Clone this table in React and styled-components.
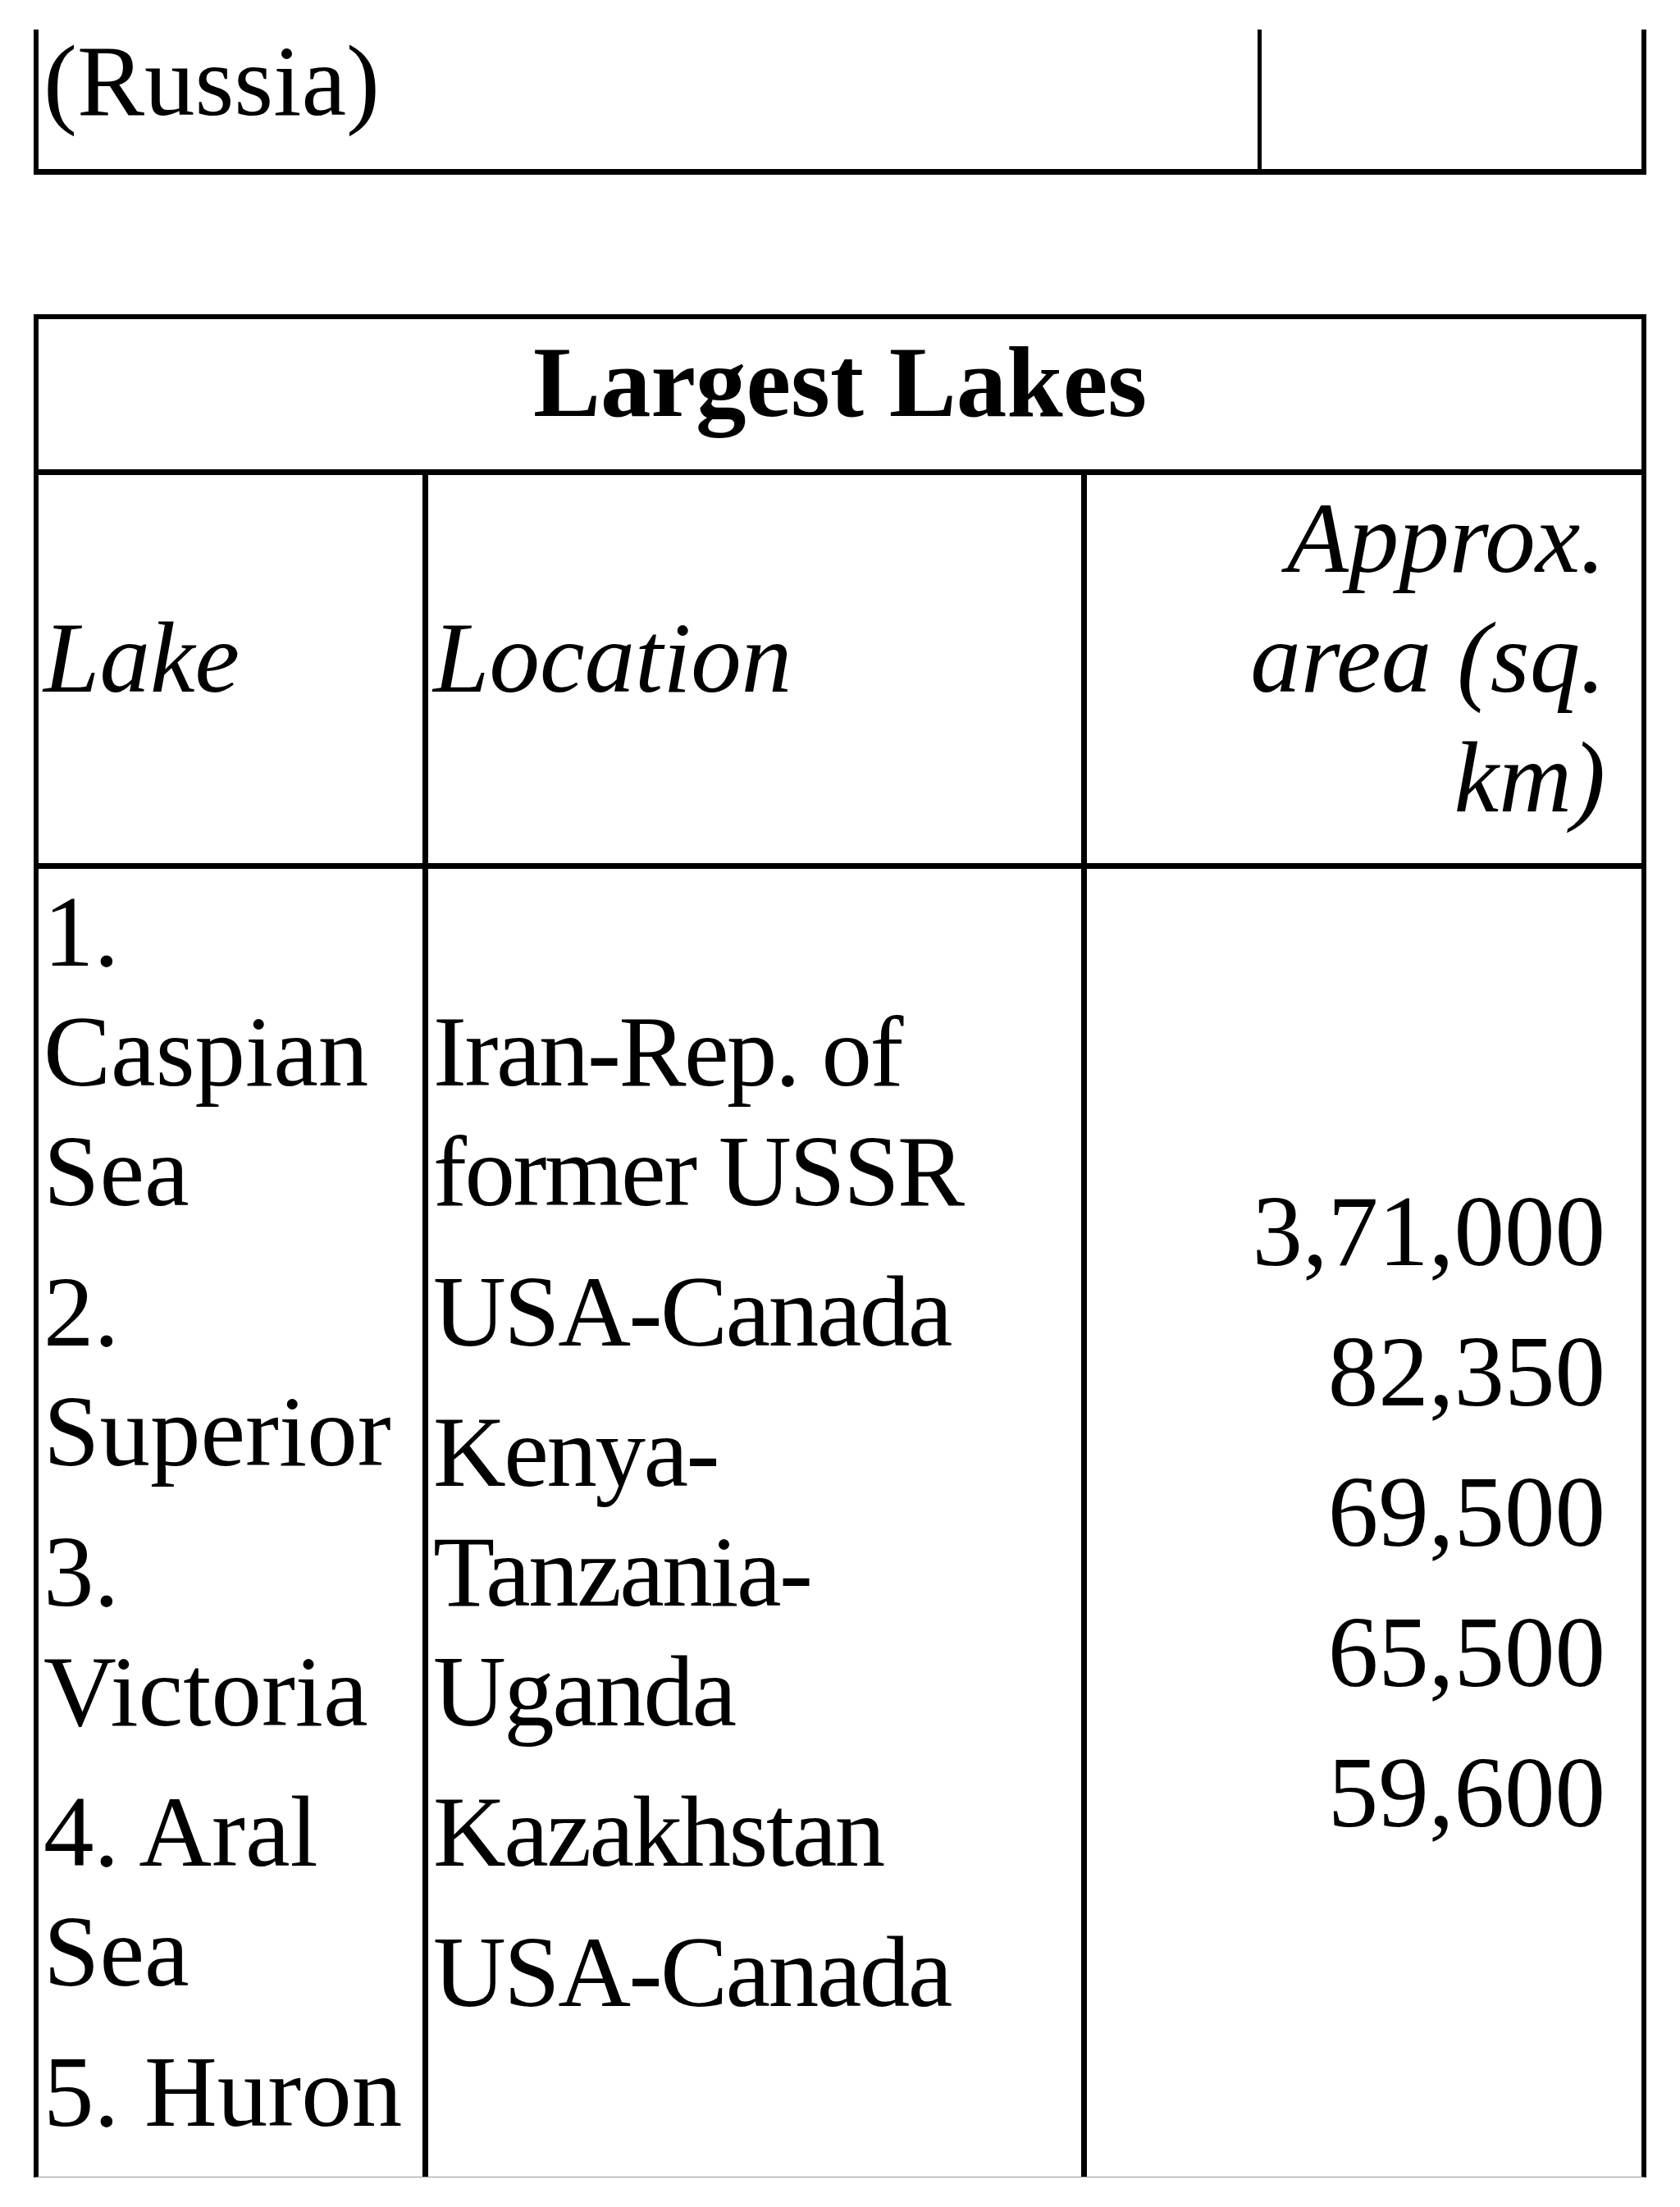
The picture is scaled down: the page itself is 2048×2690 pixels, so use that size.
import React from 'react';
import styled, { createGlobalStyle } from 'styled-components';

const GlobalStyle = createGlobalStyle`
  html, body {
    margin: 0;
    padding: 0;
    background: #fff;
  }
  body {
    font-family: "Liberation Serif", "Times New Roman", serif;
    color: #000;
  }
  * {
    box-sizing: border-box;
  }
`;

const Page = styled.div`
  padding: 36px 41px 0 41px;
  width: 2048px;
`;

const PrevTable = styled.div`
  display: grid;
  grid-template-columns: 1491px 1fr;
  border-left: 6px solid #000;
  border-right: 6px solid #000;
  border-bottom: 7px solid #000;
`;

const LakesTable = styled.div`
  margin-top: 170px;
  border: 6px solid #000;
  border-bottom: 1px solid #999;
`;

const TitleRow = styled.div`
  border-bottom: 7px solid #000;
  padding: 4px 6px 8px;
  text-align: center;
`;

const Row = styled.div`
  display: grid;
  grid-template-columns: 475px 803px 1fr;
  border-bottom: ${(p) => (p.$last ? 'none' : '7px solid #000')};
`;

const Cell = styled.div`
  display: flex;
  flex-direction: column;
  justify-content: ${(p) => (p.$top ? 'flex-start' : 'center')};
  padding: ${(p) => p.$pad || '4px 6px 6px'};
  text-align: ${(p) => (p.$right ? 'right' : 'left')};
  letter-spacing: ${(p) => (p.$tight ? '-2.5px' : 'normal')};
  border-right: ${(p) => (p.$divider ? `${p.$divider}px solid #000` : 'none')};
`;

const Para = styled.p`
  margin: ${(p) => (p.$lift ? '-10px' : '0')} 0 25px;
  font-size: 123px;
  line-height: 146px;
  font-style: ${(p) => (p.$italic ? 'italic' : 'normal')};
  font-weight: ${(p) => (p.$bold ? 700 : 400)};
`;

const lakes = ['1. Caspian Sea', '2. Superior', '3. Victoria', '4. Aral Sea', '5. Huron'];
const locations = [
  'Iran-Rep. of former USSR',
  'USA-Canada',
  'Kenya-Tanzania-Uganda',
  'Kazakhstan',
  'USA-Canada',
];
const areas = ['3,71,000', '82,350', '69,500', '65,500', '59,600'];

export default function App() {
  return (
    <>
      <GlobalStyle />
      <Page>
        <PrevTable>
          <Cell $top $divider={5} $pad="0 6px 9px">
            <Para $lift>(Russia)</Para>
          </Cell>
          <Cell />
        </PrevTable>

        <LakesTable>
          <TitleRow>
            <Para $bold>Largest Lakes</Para>
          </TitleRow>
          <Row>
            <Cell $divider={7}>
              <Para $italic>Lake</Para>
            </Cell>
            <Cell $divider={7}>
              <Para $italic>Location</Para>
            </Cell>
            <Cell $right $pad="4px 44px 6px 6px">
              <Para $italic>Approx. area (sq. km)</Para>
            </Cell>
          </Row>
          <Row $last>
            <Cell $divider={7} $pad="4px 6px 5px">
              {lakes.map((l) => (
                <Para key={l}>{l}</Para>
              ))}
            </Cell>
            <Cell $divider={7} $tight $pad="4px 6px 5px">
              {locations.map((l, i) => (
                <Para key={i}>{l}</Para>
              ))}
            </Cell>
            <Cell $right $pad="4px 44px 5px 6px">
              {areas.map((a) => (
                <Para key={a}>{a}</Para>
              ))}
            </Cell>
          </Row>
        </LakesTable>
      </Page>
    </>
  );
}
